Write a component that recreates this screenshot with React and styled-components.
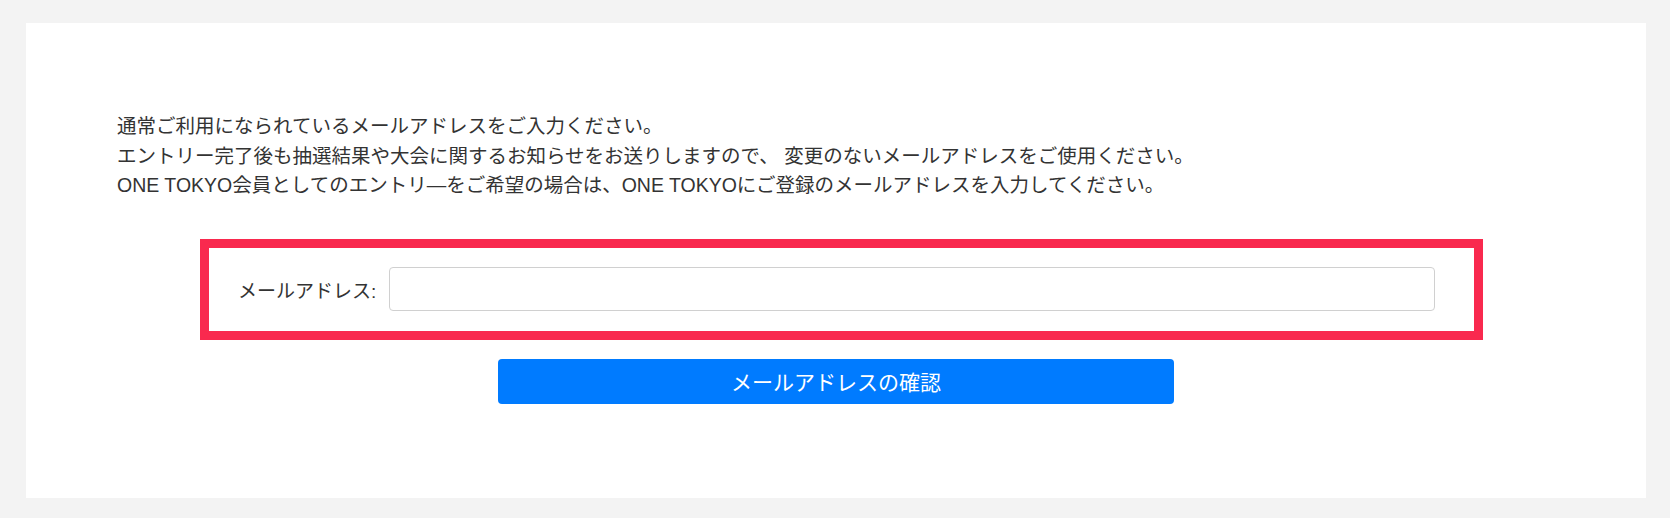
import React from "react";
import styled, { createGlobalStyle } from "styled-components";

const GlobalStyle = createGlobalStyle`
  body {
    margin: 0;
    background: #f3f3f3;
    font-family: "Liberation Sans", "Noto Sans CJK JP", sans-serif;
    color: #333;
  }
`;

const App = () => {
  return (
    <>
      <GlobalStyle />
      <Page>
        <Card>
          <Notice>
            <p>通常ご利用になられているメールアドレスをご入力ください。</p>
            <p>エントリー完了後も抽選結果や大会に関するお知らせをお送りしますので、 変更のないメールアドレスをご使用ください。</p>
            <p>ONE TOKYO会員としてのエントリ—をご希望の場合は、ONE TOKYOにご登録のメールアドレスを入力してください。</p>
          </Notice>

          <HighlightBox>
            <Label htmlFor="email">メールアドレス:</Label>
            <EmailInput id="email" type="email" />
          </HighlightBox>

          <SubmitButton type="button">メールアドレスの確認</SubmitButton>
        </Card>
      </Page>
    </>
  );
};

export default App;

const Page = styled.div`
  padding: 23px 24px 20px 26px;
`;

const Card = styled.div`
  background: #fff;
  height: 475px;
  box-sizing: border-box;
  padding-top: 89px;
  display: flex;
  flex-direction: column;
`;

const Notice = styled.div`
  margin-left: 91px;
  font-size: 19.5px;
  line-height: 29.5px;

  p {
    margin: 0;
    white-space: nowrap;
  }
`;

const HighlightBox = styled.div`
  margin: 38px 0 0 174px;
  width: 1283px;
  height: 101px;
  box-sizing: border-box;
  border: 9px solid #f9294e;
  display: flex;
  align-items: center;
  padding: 0 39px 0 29px;
`;

const Label = styled.label`
  flex-shrink: 0;
  width: 135px;
  margin-right: 16px;
  font-size: 19px;
  white-space: nowrap;
  color: #333;
`;

const EmailInput = styled.input`
  flex: 1;
  height: 44px;
  box-sizing: border-box;
  border: 1px solid #d0d0d0;
  border-radius: 4px;
  padding: 6px 12px;
  font-size: 18px;
  outline: none;
`;

const SubmitButton = styled.button`
  align-self: center;
  margin-top: 19px;
  width: 676px;
  height: 45px;
  border: none;
  border-radius: 4px;
  background: #007bff;
  color: #fff;
  font-family: "Liberation Sans", "Noto Sans CJK JP", sans-serif;
  font-size: 21px;
  cursor: pointer;
`;
